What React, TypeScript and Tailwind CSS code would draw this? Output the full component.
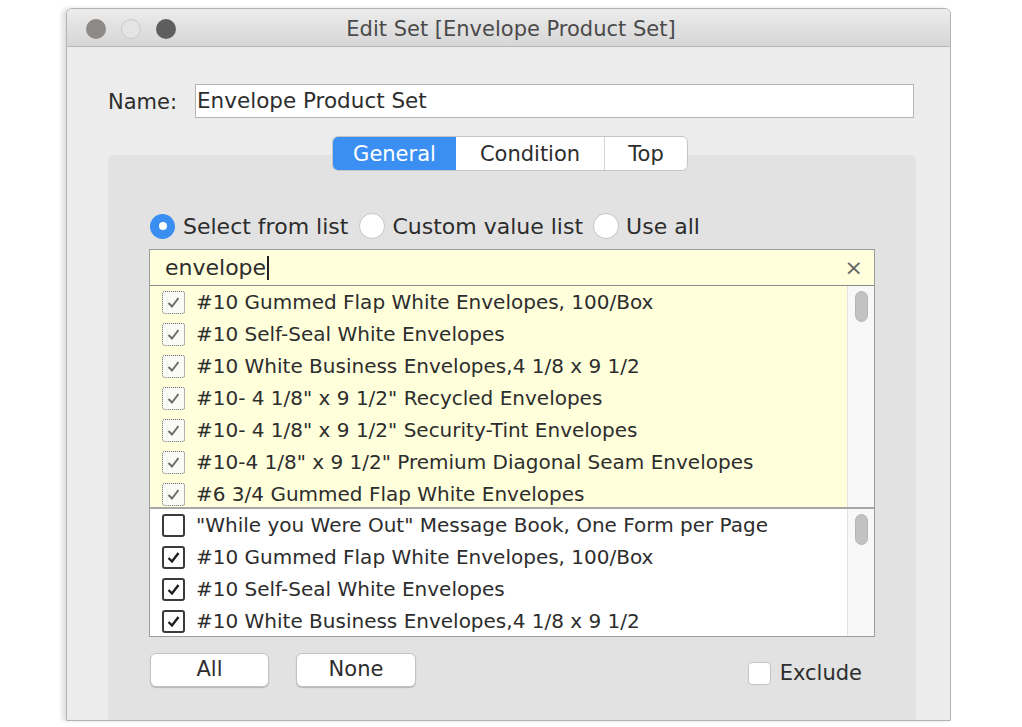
import React from "react";

const font = { fontFamily: '"DejaVu Sans", Verdana, sans-serif' };

const upperItems = [
  "#10 Gummed Flap White Envelopes, 100/Box",
  "#10 Self-Seal White Envelopes",
  "#10 White Business Envelopes,4 1/8 x 9 1/2",
  '#10- 4 1/8" x 9 1/2" Recycled Envelopes',
  '#10- 4 1/8" x 9 1/2" Security-Tint Envelopes',
  '#10-4 1/8" x 9 1/2" Premium Diagonal Seam Envelopes',
  "#6 3/4 Gummed Flap White Envelopes",
];

const lowerItems: { label: string; checked: boolean }[] = [
  { label: '"While you Were Out" Message Book, One Form per Page', checked: false },
  { label: "#10 Gummed Flap White Envelopes, 100/Box", checked: true },
  { label: "#10 Self-Seal White Envelopes", checked: true },
  { label: "#10 White Business Envelopes,4 1/8 x 9 1/2", checked: true },
];

function DimCheck() {
  return (
    <div className="w-[23px] h-[23px] rounded-[3px] border border-dotted border-[#666] bg-[#fbfbf6] flex items-center justify-center shrink-0">
      <svg width="15" height="13" viewBox="0 0 15 13">
        <polyline points="2.5,7 6,10.5 12.5,2" fill="none" stroke="#6a6a6a" strokeWidth="1.9" />
      </svg>
    </div>
  );
}

function DarkCheck({ checked }: { checked: boolean }) {
  return (
    <div className="w-[23px] h-[23px] rounded-[3px] border-[2px] border-[#3a3a3a] bg-white flex items-center justify-center shrink-0">
      {checked && (
        <svg width="15" height="13" viewBox="0 0 15 13">
          <polyline points="2.5,7 6,10.5 12.5,2" fill="none" stroke="#1e1e1e" strokeWidth="2.4" />
        </svg>
      )}
    </div>
  );
}

function Scrollbar() {
  return (
    <div className="w-[27px] shrink-0 border-l border-[#e2e2e2] bg-[#f8f8f8] flex justify-center pt-[5px]">
      <div className="w-[13px] h-[31px] rounded-full bg-[#c2c2c2] border border-[#b5b5b5]" />
    </div>
  );
}

export default function App() {
  return (
    <div className="w-[1022px] h-[727px] bg-white overflow-hidden pt-[8px] pl-[66px] text-[#2d2d2d]" style={font}>
      <div className="w-[885px] h-[713px] rounded-t-[6px] border border-[#b3b3b3] bg-[#ececec] flex flex-col overflow-hidden shadow-[-4px_0_4px_rgba(0,0,0,0.12)]">
        {/* Title bar */}
        <div className="h-[38px] shrink-0 bg-gradient-to-b from-[#ececec] to-[#d6d6d6] border-b border-[#b8b8b8] flex items-center">
          <div className="flex items-center gap-[15px] pl-[19px] pt-[2px]">
            <div className="w-[20px] h-[20px] rounded-full bg-[#8d8987]" />
            <div className="w-[20px] h-[20px] rounded-full bg-[#e4e4e4] border border-[#c9c9c9]" />
            <div className="w-[20px] h-[20px] rounded-full bg-[#5e5e5e]" />
          </div>
          <div className="flex-1 text-center text-[21px] text-[#4a4a4a] pr-[104px] pt-[4px] leading-none">
            Edit Set [Envelope Product Set]
          </div>
        </div>

        {/* Body */}
        <div className="flex-1 pt-[37px] pl-[41px] pr-[34px]">
          <div className="flex items-center">
            <div className="w-[87px] text-[21px] leading-none pt-[2px]">Name:</div>
            <div className="w-[719px] h-[34px] bg-white border border-[#b4b4b4] flex items-center pl-[1px] pt-[1px] text-[21.5px]">
              Envelope Product Set
            </div>
          </div>

          {/* Group box */}
          <div className="mt-[37px] w-[808px] h-[600px] bg-[#e2e2e2] rounded-[6px] px-[41px] flex flex-col">
            <div className="flex justify-center pr-[4px] -mt-[19px]">
              <div className="flex h-[35px] rounded-[6px] overflow-hidden border border-[#c4c4c4] bg-white text-[21px]">
                <div className="w-[123px] bg-[#3b8ff3] text-white flex items-center justify-center pt-[3px]">General</div>
                <div className="w-[149px] border-r border-[#d4d4d4] flex items-center justify-center pt-[3px]">Condition</div>
                <div className="w-[82px] flex items-center justify-center pt-[3px]">Top</div>
              </div>
            </div>

            {/* Radios */}
            <div className="mt-[42px] h-[26px] flex items-center text-[22px] pl-[1px]">
              <div className="w-[25px] h-[25px] rounded-full bg-[#3a8ef0] flex items-center justify-center shrink-0">
                <div className="w-[8px] h-[8px] rounded-full bg-white" />
              </div>
              <span className="ml-[8px]">Select from list</span>
              <div className="ml-[11px] w-[26px] h-[26px] rounded-full bg-white border border-[#c6c6c6] shrink-0" />
              <span className="ml-[7px]">Custom value list</span>
              <div className="ml-[10px] w-[26px] h-[26px] rounded-full bg-white border border-[#c6c6c6] shrink-0" />
              <span className="ml-[7px]">Use all</span>
            </div>

            {/* Search + lists */}
            <div className="mt-[10px] border border-[#9c9c9c]">
              <div className="h-[36px] bg-[#ffffdc] border-b border-[#8a8a8a] flex items-center pl-[15px] pr-[11px] text-[22px]">
                <span>envelope</span>
                <span className="w-[1.5px] h-[24px] bg-[#222] ml-[1px]" />
                <span className="ml-auto text-[#666] text-[22px] leading-none">×</span>
              </div>
              <div className="flex bg-[#ffffdc] h-[221px] overflow-hidden">
                <div className="flex-1">
                  {upperItems.map((t) => (
                    <div key={t} className="h-[32px] flex items-center pl-[12px] gap-[11px] text-[20px] whitespace-nowrap">
                      <DimCheck />
                      <span>{t}</span>
                    </div>
                  ))}
                </div>
                <Scrollbar />
              </div>
              <div className="h-[2px] bg-[#a6a6a6]" />
              <div className="flex bg-white h-[127px] overflow-hidden">
                <div className="flex-1">
                  {lowerItems.map((it) => (
                    <div key={it.label} className="h-[32px] flex items-center pl-[12px] gap-[11px] text-[20px] whitespace-nowrap">
                      <DarkCheck checked={it.checked} />
                      <span>{it.label}</span>
                    </div>
                  ))}
                </div>
                <Scrollbar />
              </div>
            </div>

            {/* Buttons */}
            <div className="mt-[16px] flex items-start pl-[1px] text-[21px]">
              <div className="w-[119px] h-[34px] bg-white rounded-[6px] border border-[#c2c2c2] shadow-[0_1px_1px_rgba(0,0,0,0.2)] flex items-center justify-center">All</div>
              <div className="ml-[27px] w-[120px] h-[34px] bg-white rounded-[6px] border border-[#c2c2c2] shadow-[0_1px_1px_rgba(0,0,0,0.2)] flex items-center justify-center">None</div>
              <div className="ml-auto mr-[13px] mt-[5px] flex items-center">
                <div className="w-[23px] h-[23px] rounded-[4px] bg-white border border-[#c4c4c4]" />
                <span className="ml-[9px]">Exclude</span>
              </div>
            </div>
            <div className="mt-[31px] ml-[11px] w-[14px] h-[14px] rounded-full border-[2px] border-[#555] shrink-0" />
          </div>
        </div>
      </div>
    </div>
  );
}
